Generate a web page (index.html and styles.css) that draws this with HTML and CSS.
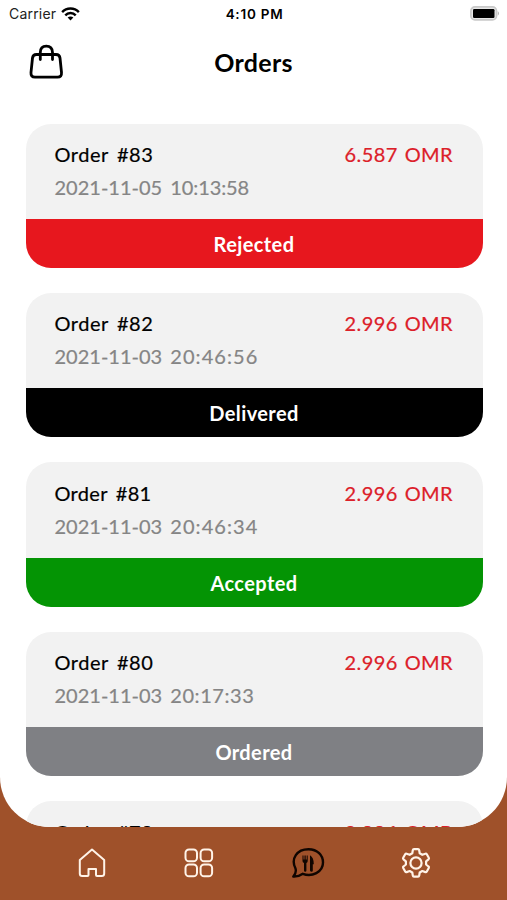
FILE: index.html
```
<!DOCTYPE html>
<html lang="en">
<head>
<meta charset="utf-8">
<title>Orders</title>
<link rel="stylesheet" href="styles.css">
</head>
<body>
<div class="app">
  <div class="panel">
    <div class="status">
      <div class="carrier"><span>Carrier</span>
        <svg width="19" height="14" viewBox="0 0 20 14"><g fill="none" stroke="#000" stroke-width="2.5"><path d="M1.2 5A12 12 0 0 1 18.800 5"/><path d="M4.500 8.400A7.500 7.500 0 0 1 15.500 8.400"/></g><path d="M7 10.800A4.200 4.200 0 0 1 13 10.800L10 13.800Z"/></svg>
      </div>
      <span class="time">4:10 PM</span>
      <svg class="battery" width="30" height="15" viewBox="0 0 30 15"><rect x=".9" y=".9" width="25.6" height="13" rx="4" fill="#e8e8e8" stroke="#c9c9c9" stroke-width="1.7"/><rect x="3" y="3" width="21.5" height="9" rx="1.2"/><path d="M27.8 5Q30 7.4 27.8 9.8Z" fill="#aaa"/></svg>
    </div>
    <header class="header">
      <svg class="bag" width="36" height="36" viewBox="0 0 36 36" fill="none" stroke="#000" stroke-width="2.8" stroke-linecap="round" stroke-linejoin="round"><path d="M8.500 10.500H28Q31.600 10.500 32 14L33.500 28.500Q33.900 33.200 29.500 33.200H7Q2.600 33.200 3 28.500L4.500 14Q4.900 10.500 8.500 10.500Z"/><path d="M12.300 15.500V8.500Q12.300 2.200 18.300 2.200T24.500 8.500V15.500"/></svg>
      <h1>Orders</h1>
    </header>
    <main class="orders">
      <article class="card">
        <div class="info"><div class="top"><span class="name">Order #83</span><span class="price">6.587 OMR</span></div><div class="date">2021-11-05 <span class="clock tight">10:13:58</span></div></div>
        <div class="state rejected">Rejected</div>
      </article>
      <article class="card">
        <div class="info"><div class="top"><span class="name">Order #82</span><span class="price">2.996 OMR</span></div><div class="date">2021-11-03 <span class="clock">20:46:56</span></div></div>
        <div class="state delivered">Delivered</div>
      </article>
      <article class="card">
        <div class="info"><div class="top"><span class="name narrow">Order #81</span><span class="price">2.996 OMR</span></div><div class="date">2021-11-03 <span class="clock">20:46:34</span></div></div>
        <div class="state accepted">Accepted</div>
      </article>
      <article class="card">
        <div class="info"><div class="top"><span class="name">Order #80</span><span class="price">2.996 OMR</span></div><div class="date">2021-11-03 <span class="clock medium">20:17:33</span></div></div>
        <div class="state ordered">Ordered</div>
      </article>
      <article class="card">
        <div class="info"><div class="top"><span class="name">Order #79</span><span class="price">2.996 OMR</span></div></div>
      </article>
    </main>
  </div>
  <nav class="tabs">
    <svg width="30" height="32" viewBox="0 0 30 32" fill="none" stroke="#fff3e8" stroke-width="2" stroke-linejoin="round"><path d="M15 2.600L27.200 13V26.500Q27.200 29 24.700 29H20Q19 29 19 28V22H11.500V28Q11.500 29 10.500 29H5.200Q2.800 29 2.800 26.500V13Z"/></svg>
    <svg width="30" height="32" viewBox="0 0 30 32" fill="none" stroke="#fff3e8" stroke-width="2"><rect x="1.500" y="2.500" width="11.500" height="11.800" rx="3.600"/><rect x="16.600" y="2.500" width="11.500" height="11.800" rx="3.600"/><rect x="1.500" y="17.500" width="11.500" height="11.800" rx="3.600"/><rect x="16.600" y="17.500" width="11.500" height="11.800" rx="3.600"/></svg>
    <svg width="34" height="32" viewBox="0 0 34 32"><path d="M4.500 21.500C-.5 11.500 6 2.200 17.500 2.200C26.500 2.200 32 8.500 32 15.500C32 25 21 30.500 11.800 26.800C9 28.800 5.500 29.800 2.300 29.600C4.500 27.200 5.200 24 4.500 21.500Z" fill="none" stroke="#100500" stroke-width="2.400" stroke-linejoin="round"/><path d="M11.500 8.500h1v4h1v-4h1.200v4h1v-4h1v5.500q0 1.500-1.300 2v7.500q0 1.200-1.200 1.200t-1.200-1.200V16q-1.500-.5-1.500-2ZM19 8.200q3.800 2.200 3.800 9h-1v6.300q0 1.200-1.200 1.200T19 23.500Z" fill="#100500"/></svg>
    <svg width="32" height="32" viewBox="0 0 32 32" fill="none" stroke="#fff3e8" stroke-width="2.200" stroke-linejoin="round"><path d="M14 2.200H18Q19 2.200 19.200 3.200L19.700 6.300L22.300 7.800L25.400 6.700Q26.300 6.400 26.800 7.300L28.800 10.800Q29.300 11.700 28.500 12.300L26.100 14.300V17.500L28.500 19.500Q29.300 20.100 28.800 21L26.800 24.500Q26.300 25.400 25.400 25.100L22.300 24L19.700 25.500L19.200 28.600Q19 29.600 18 29.600H14Q13 29.600 12.800 28.600L12.300 25.500L9.700 24L6.600 25.100Q5.700 25.400 5.200 24.500L3.200 21Q2.700 20.100 3.500 19.500L5.900 17.500V14.300L3.500 12.300Q2.700 11.700 3.200 10.800L5.200 7.300Q5.700 6.400 6.600 6.700L9.700 7.800L12.300 6.300L12.800 3.200Q13 2.200 14 2.200Z"/><circle cx="16" cy="16" r="5.600"/></svg>
  </nav>
</div>
</body>
</html>
```
FILE: styles.css
```
* { box-sizing: border-box; }
body { margin: 0; font-family: Lato, "Open Sans", sans-serif; color: #000; }
svg { display: block; flex: none; }
.app { width: 507px; height: 900px; overflow: hidden; background: #9f512a; }
.panel { height: 826.5px; overflow: hidden; background: #fff; border-radius: 0 0 50px 50px; }
.status { display: grid; grid-template-columns: 1fr auto 1fr; height: 27px; padding: 0 7px 0 9px; align-items: center; font-family: Inter, sans-serif; font-size: 14px; }
.carrier { display: flex; align-items: center; gap: 5px; letter-spacing: .2px; color: #222; }
.time { font-weight: 600; font-size: 13.5px; letter-spacing: .75px; }
.battery { justify-self: end; }
.header { display: grid; grid-template-columns: 36px 1fr 36px; align-items: center; height: 71px; padding: 0 28px; }
.bag { margin-top: -2px; }
h1 { margin: -2px 0 0; text-align: center; font-size: 25px; line-height: 30px; font-weight: 700; letter-spacing: .3px; }
.orders { display: flex; flex-direction: column; gap: 24.8px; padding: 25.5px 24.5px 0 25.500px; }
.card { flex: none; height: 144.600px; border-radius: 25px; overflow: hidden; background: #f2f2f2; }
.info { height: 95.500px; padding: 17.500px 29.500px 0 29px; }
.top { display: flex; justify-content: space-between; line-height: 26px; font-size: 20px; }
.name { letter-spacing: .5px; word-spacing: 3px; -webkit-text-stroke: .2px #000; }
.narrow { letter-spacing: .3px; }
.price { color: #dc2029; letter-spacing: .4px; word-spacing: 1.500px; -webkit-text-stroke: .2px #dc2029; }
.date { margin-top: 7px; line-height: 26px; font-size: 20px; color: #858585; letter-spacing: 0; word-spacing: 3px; -webkit-text-stroke: .2px #858585; }
.clock { letter-spacing: 1.050px; }
.tight { letter-spacing: -.1px; }
.medium { letter-spacing: .550px; }
.state { height: 49.100px; line-height: 50px; text-align: center; color: #fff; font-size: 20px; font-weight: 700; letter-spacing: .4px; }
.rejected { background: #e7171e; }
.delivered { background: #000; }
.accepted { background: #049404; }
.ordered { background: #7f8084; }
.tabs { display: flex; justify-content: space-between; align-items: center; height: 73.500px; padding: 0 75px 0 77px; }
.tabs svg:nth-child(2), .tabs svg:nth-child(3) { margin-left: 2px; }
```
